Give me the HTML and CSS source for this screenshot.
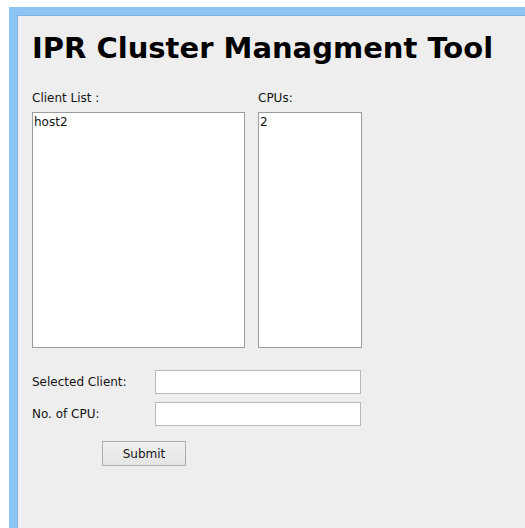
FILE: index.html
```html
<!DOCTYPE html>
<html>
<head>
<meta charset="utf-8">
<link rel="stylesheet" href="styles.css">
</head>
<body>
<div class="window">
  <div class="panel">
    <h1 class="title">IPR Cluster Managment Tool</h1>
    <div class="lists">
      <div class="col col-clients">
        <div class="label">Client List :</div>
        <div class="listbox"><div class="item">host2</div></div>
      </div>
      <div class="col col-cpus">
        <div class="label">CPUs:</div>
        <div class="listbox"><div class="item">2</div></div>
      </div>
    </div>
    <div class="form">
      <div class="row">
        <span class="label">Selected Client:</span>
        <span class="field"></span>
      </div>
      <div class="row">
        <span class="label">No. of CPU:</span>
        <span class="field"></span>
      </div>
    </div>
    <div class="actions">
      <button class="btn">Submit</button>
    </div>
  </div>
</div>
</body>
</html>
```
FILE: styles.css
```css
html, body {
  margin: 0;
  padding: 0;
  background: #ffffff;
  height: 100%;
}

.window {
  margin-left: 9px;
  padding-top: 7px;
  height: calc(100% - 7px);
}

.panel {
  box-sizing: border-box;
  height: 100%;
  background: #eeeeee;
  border-left: 8px solid #8dc5f5;
  border-top: 8px solid #8dc5f5;
  box-shadow: inset 1px 1px 0 #7fb3e0;
  padding: 0 0 0 15px;
  font-family: "DejaVu Sans", sans-serif;
  font-size: 12px;
  color: #141414;
}

.title {
  margin: 0;
  padding-top: 15px;
  font-family: "DejaVu Sans", sans-serif;
  font-weight: bold;
  font-size: 29px;
  line-height: 36px;
  color: #000;
}

.lists {
  display: flex;
  gap: 13px;
  margin-top: 25px;
}

.label {
  line-height: 14px;
  height: 14px;
}

.col .label {
  margin-bottom: 7px;
}

.listbox {
  box-sizing: border-box;
  height: 236px;
  background: #fff;
  border: 1px solid #9c9c9c;
  padding: 2px 1px;
}

.col-clients .listbox { width: 213px; }
.col-cpus .listbox { width: 104px; }

.item {
  line-height: 14px;
}

.form {
  display: flex;
  flex-direction: column;
  gap: 8px;
  margin-top: 22px;
}

.row {
  display: flex;
  align-items: center;
}

.row .label {
  width: 123px;
}

.field {
  box-sizing: border-box;
  width: 206px;
  height: 24px;
  background: #fff;
  border: 1px solid #b9b9b9;
}

.actions {
  padding-left: 70px;
  margin-top: 15px;
}

.btn {
  box-sizing: border-box;
  width: 84px;
  height: 25px;
  border: 1px solid #acacac;
  background: linear-gradient(#f0f0f0, #e5e5e5);
  font-family: "DejaVu Sans", sans-serif;
  font-size: 12px;
  color: #141414;
  padding: 0;
}
```
